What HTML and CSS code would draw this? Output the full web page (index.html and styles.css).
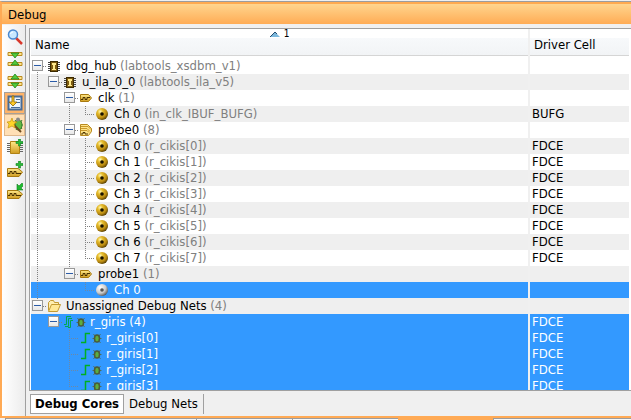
FILE: index.html
```html
<!DOCTYPE html>
<html lang="en"><head><meta charset="utf-8"><title>Debug</title><link rel="stylesheet" href="styles.css"></head>
<body>
<svg class="defs" aria-hidden="true">
<defs>
<radialGradient id="gold" cx=".35" cy=".3" r=".75"><stop offset="0" stop-color="#fff8b8"/><stop offset=".3" stop-color="#e6bc2c"/><stop offset=".7" stop-color="#b98a10"/><stop offset="1" stop-color="#4e3800"/></radialGradient>
<radialGradient id="silver" cx=".35" cy=".3" r=".75"><stop offset="0" stop-color="#fff"/><stop offset=".6" stop-color="#ccc"/><stop offset="1" stop-color="#555"/></radialGradient>
<linearGradient id="brass" x1="0" y1="0" x2="0" y2="1"><stop offset="0" stop-color="#ffe98a"/><stop offset="1" stop-color="#d09c20"/></linearGradient>
<path id="plus" d="M11.500 0h2v2.500H16v2h-2.500V7h-2V4.500H9v-2h2.500z" fill="#28bd38" stroke="#138020" stroke-width=".6"/>
<g id="port"><path d="M.5 7.500H11l4.500 3.500L12 15.500H.5z" fill="url(#brass)" stroke="#a87a10"/><path d="M1 12.500h2v-2h2v2h2v-2h2v2h5" fill="none" stroke="#4a3200"/></g>
<g id="bug"><path d="M14.500 4l7 9M21.500 4l-7 9M13.500 8.500h9" stroke="#4f7060"/><ellipse cx="18" cy="8.500" rx="2.500" ry="3.500" fill="#5cae40" stroke="#4a5a3a" stroke-width="1.500"/></g>
</defs>
<symbol id="core" viewBox="0 0 16 16"><path d="M1 4.500h12M1 6.500h12M1 8.500h12M1 10.500h12M1 12.500h12" stroke="#444"/><path d="M3 3h8v11H3z" fill="#3c2a00"/><path d="M4 4h6v9H4z" fill="#7c5a10"/><path d="M5 5h4v2H8v4h1v1H5v-1h1V7H5z" fill="#ffe98a"/></symbol>
<symbol id="probe" viewBox="0 0 16 16"><path d="M1.500 4.500H9.500L12.500 8L9.500 11.500H1.500z" fill="url(#brass)" stroke="#a87a10"/><path d="M2 9.500h2v-2h2v2h2v-2h3" fill="none" stroke="#4a3200"/></symbol>
<symbol id="bus" viewBox="0 0 16 16"><path d="M1.500 2.500H8.500L12.500 6.500V9.500L9.500 13.500H1.500z" fill="#ffe58a" stroke="#b98a20"/><path d="M2 4.500h7l3 3M2 6.500h6l3 3M2 8.500h6l2 2" fill="none" stroke="#c9972a"/><path d="M2 12h2v-1.500h2V12h3" fill="none" stroke="#4a3200"/></symbol>
<symbol id="ch" viewBox="0 0 16 16"><circle cx="7" cy="8" r="6" fill="url(#gold)"/><circle cx="7" cy="8" r="1.800" fill="#171100"/></symbol>
<symbol id="chfree" viewBox="0 0 16 16"><circle cx="7" cy="8" r="6" fill="url(#silver)"/><circle cx="7" cy="8" r="1.800" fill="#555"/></symbol>
<symbol id="folder" viewBox="0 0 16 16"><path d="M1.500 12.500V4.500L3.500 2.500H6.500L7.500 4.500H11.500V6.500" fill="#ffeeb0" stroke="#c39a32"/><path d="M1.500 13.500L4.500 6.500H13.500L10.500 13.500z" fill="#ffe895" stroke="#c39a32"/></symbol>
<symbol id="net" viewBox="0 0 24 16"><path d="M2 12.500H6.500V3.500H11" fill="none" stroke="#00b020" stroke-width="1.500"/><use href="#bug"/></symbol>
<symbol id="nets" viewBox="0 0 24 16"><path d="M1 10.500H3.500V2.500H8M2 12.500H5.500V4.500H9M5 13.500H7.500V6.500H10" fill="none" stroke="#00a850"/><use href="#bug"/></symbol>
</svg>
<main class="window">
<h1 class="title">Debug</h1>
<div class="body">
<nav class="toolbar" aria-label="Debug tools">
<button aria-label="Find"><svg viewBox="0 0 16 16"><path d="M9 9l6 6" stroke="#d8382c" stroke-width="2.500"/><circle cx="6" cy="5.500" r="4.500" fill="#c8e8ff" stroke="#4a88d0" stroke-width="1.500"/><path d="M3.500 5q.5-2 2.500-2" stroke="#fff" fill="none"/></svg></button>
<button aria-label="Collapse all"><svg viewBox="0 0 16 16"><path d="M1 4.500V1.500H15V4.500zM1 14.500V11.500H15V14.500z" fill="#ffe38a" stroke="#b98a20"/><path d="M4 2h8L8 7zM4 14h8L8 9z" fill="#54c93c" stroke="#107a10" stroke-width=".7"/></svg></button>
<button aria-label="Expand all"><svg viewBox="0 0 16 16"><path d="M1 6.500V3.500H15V6.500zM1 12.500V9.500H15V12.500z" fill="#ffe38a" stroke="#b98a20"/><path d="M4 6h8L8 1zM4 10h8l-4 5z" fill="#54c93c" stroke="#107a10" stroke-width=".7"/></svg></button>
<button class="on" aria-label="Auto scroll" aria-pressed="true"><svg viewBox="0 0 16 16"><path d="M1.500 1.500h13v13h-13z" fill="#edf6ff" stroke="#486c98" stroke-width="2"/><path d="M9 4.500h4M9 7.500h4M4 12.500h9" stroke="#486c98"/><path d="M5 1h2v6h3l-4 4-4-4h3z" fill="#ffca28" stroke="#8b6508" stroke-width=".8"/></svg></button>
<button class="on light" aria-label="Set up debug" aria-pressed="true"><svg viewBox="0 0 16 16"><path d="M8 3l7 9M15 3l-6 10M8 8h8" stroke="#357d2c"/><ellipse cx="11.500" cy="8" rx="3.500" ry="5" fill="#60ba42" stroke="#357d2c"/><circle cx="11" cy="2.500" r="2" fill="#888"/><path d="M6 7l8 8" stroke="#6d4a20" stroke-width="2"/><path d="M5 1l1 3.500L10 5 7 7l1 4-3-2-4 2 1-4-2-2 3.500-.5z" fill="#ffd52a" stroke="#c29310" stroke-width=".7"/></svg></button>
<button aria-label="Create debug core"><svg viewBox="0 0 16 16"><path d="M0 4.500h16M0 6.500h16M0 8.500h16M0 10.500h16M0 12.500h16" stroke="#666"/><path d="M3.500 2.500h9v12h-9z" fill="url(#brass)" stroke="#b08215"/><use href="#plus"/></svg></button>
<button aria-label="Create debug port"><svg viewBox="0 0 16 16"><use href="#port"/><use href="#plus"/></svg></button>
<button aria-label="Connect debug port"><svg viewBox="0 0 16 16"><use href="#port"/><path d="M15 0l-3 3-2-2v6h6l-2-2 3-3z" fill="#20b830" stroke="#138020" stroke-width=".6"/></svg></button>
</nav>
<section class="content">
<div class="pane">
<table>
<colgroup><col><col class="driver"></colgroup>
<thead><tr><th>Name<span class="sort"><svg viewBox="0 0 10 5"><path d="M0 5L5 0l5 5z" fill="#7cb8dc"/><path d="M0 5l5-5 2 2" fill="none" stroke="#254e70"/></svg>1</span></th><th>Driver Cell</th></tr></thead>
<tbody>
<tr><td><div class="node"><button class="box down" aria-label="Collapse"></button><svg><use href="#core"/></svg><span>dbg_hub <i>(labtools_xsdbm_v1)</i></span></div></td><td></td></tr>
<tr><td><div class="node"><b class="v"></b><button class="box" aria-label="Collapse"></button><svg><use href="#core"/></svg><span>u_ila_0_0 <i>(labtools_ila_v5)</i></span></div></td><td></td></tr>
<tr><td><div class="node"><b class="v"></b><b></b><button class="box down" aria-label="Collapse"></button><svg><use href="#probe"/></svg><span>clk <i>(1)</i></span></div></td><td></td></tr>
<tr><td><div class="node"><b class="v"></b><b></b><b class="v"></b><b class="end"></b><svg><use href="#ch"/></svg><span>Ch 0 <i>(in_clk_IBUF_BUFG)</i></span></div></td><td>BUFG</td></tr>
<tr><td><div class="node"><b class="v"></b><b></b><button class="box through" aria-label="Collapse"></button><svg><use href="#bus"/></svg><span>probe0 <i>(8)</i></span></div></td><td></td></tr>
<tr><td><div class="node"><b class="v"></b><b></b><b class="v"></b><b class="v h"></b><svg><use href="#ch"/></svg><span>Ch 0 <i>(r_cikis[0])</i></span></div></td><td>FDCE</td></tr>
<tr><td><div class="node"><b class="v"></b><b></b><b class="v"></b><b class="v h"></b><svg><use href="#ch"/></svg><span>Ch 1 <i>(r_cikis[1])</i></span></div></td><td>FDCE</td></tr>
<tr><td><div class="node"><b class="v"></b><b></b><b class="v"></b><b class="v h"></b><svg><use href="#ch"/></svg><span>Ch 2 <i>(r_cikis[2])</i></span></div></td><td>FDCE</td></tr>
<tr><td><div class="node"><b class="v"></b><b></b><b class="v"></b><b class="v h"></b><svg><use href="#ch"/></svg><span>Ch 3 <i>(r_cikis[3])</i></span></div></td><td>FDCE</td></tr>
<tr><td><div class="node"><b class="v"></b><b></b><b class="v"></b><b class="v h"></b><svg><use href="#ch"/></svg><span>Ch 4 <i>(r_cikis[4])</i></span></div></td><td>FDCE</td></tr>
<tr><td><div class="node"><b class="v"></b><b></b><b class="v"></b><b class="v h"></b><svg><use href="#ch"/></svg><span>Ch 5 <i>(r_cikis[5])</i></span></div></td><td>FDCE</td></tr>
<tr><td><div class="node"><b class="v"></b><b></b><b class="v"></b><b class="v h"></b><svg><use href="#ch"/></svg><span>Ch 6 <i>(r_cikis[6])</i></span></div></td><td>FDCE</td></tr>
<tr><td><div class="node"><b class="v"></b><b></b><b class="v"></b><b class="end"></b><svg><use href="#ch"/></svg><span>Ch 7 <i>(r_cikis[7])</i></span></div></td><td>FDCE</td></tr>
<tr><td><div class="node"><b class="v"></b><b></b><button class="box up" aria-label="Collapse"></button><svg><use href="#probe"/></svg><span>probe1 <i>(1)</i></span></div></td><td></td></tr>
<tr class="selected"><td><div class="node"><b class="v"></b><b></b><b></b><b class="end"></b><svg><use href="#chfree"/></svg><span>Ch 0</span></div></td><td></td></tr>
<tr><td><div class="node"><button class="box up" aria-label="Collapse"></button><svg><use href="#folder"/></svg><span>Unassigned Debug Nets <i>(4)</i></span></div></td><td></td></tr>
<tr class="selected"><td><div class="node"><b></b><button class="box" aria-label="Collapse"></button><svg class="wide"><use href="#nets"/></svg><span>r_giris (4)</span></div></td><td>FDCE</td></tr>
<tr class="selected"><td><div class="node"><b></b><b></b><b class="v h"></b><svg class="wide"><use href="#net"/></svg><span>r_giris[0]</span></div></td><td>FDCE</td></tr>
<tr class="selected"><td><div class="node"><b></b><b></b><b class="v h"></b><svg class="wide"><use href="#net"/></svg><span>r_giris[1]</span></div></td><td>FDCE</td></tr>
<tr class="selected"><td><div class="node"><b></b><b></b><b class="v h"></b><svg class="wide"><use href="#net"/></svg><span>r_giris[2]</span></div></td><td>FDCE</td></tr>
<tr class="selected"><td><div class="node"><b></b><b></b><b class="end"></b><svg class="wide"><use href="#net"/></svg><span>r_giris[3]</span></div></td><td>FDCE</td></tr>
</tbody>
</table>
</div>
<div class="tabs" role="tablist"><button class="active" role="tab" aria-selected="true">Debug Cores</button><button role="tab" aria-selected="false">Debug Nets</button></div>
</section>
</div>
</main>
<footer class="dock"><span></span><span></span><span></span><span class="wide-tab"></span><span class="current"></span><span class="rest"></span></footer>
</body></html>
```
FILE: styles.css
```css
* { box-sizing: border-box; }
body { margin: 0; height: 100vh; display: flex; flex-direction: column; overflow: hidden; background: #f0f0f0; color: #000; font: 13px/16px "DejaVu Sans Condensed", "Noto Sans", sans-serif; }
button { font: inherit; color: inherit; padding: 0; border: 0; background: none; }
.defs { position: absolute; width: 0; height: 0; }
.window { flex: 1; min-height: 0; display: flex; flex-direction: column; margin-top: 1px; border: 2px solid #ffaa55; border-top: 1px solid #9c9c9c; border-right: 0; }
.title { margin: 0; height: 22px; padding: 3px 6px 0; border-top: 2px solid #ffaa50; background: linear-gradient(#ffd58e, #ffac55); font: inherit; line-height: 16px; }
.body { flex: 1; min-height: 0; display: flex; }
.toolbar { width: 24px; padding-top: 1px; margin-top: 1px; border-right: 1px solid #a0a0a0; background: linear-gradient(90deg, #fff, #ececec); }
.toolbar button { width: 21px; height: 22px; margin-left: 2px; display: grid; place-items: center; border: 1px solid transparent; }
.toolbar svg { width: 16px; height: 16px; }
.toolbar .on { background: #ffb469; border-color: #a8a098; }
.toolbar .light { background: #ffdfb5; border-color: #dfb78c; }
.content { flex: 1; min-width: 0; display: flex; flex-direction: column; padding: 4px 0 2px 3px; }
.pane { flex: 1; min-height: 0; overflow: hidden; border: 1px solid #a0a0a0; border-right: 0; background: #fff; padding: 0 2px 0 1px; }
table { width: 100%; table-layout: fixed; border-collapse: separate; border-spacing: 0; }
.driver { width: 99px; }
th { position: relative; height: 29px; padding: 3px 4px 0; text-align: left; font-weight: normal; background: linear-gradient(#fff 9px, #f7f9fb 9px, #f2f4f6 26px, #d5d5d5 26px, #d5d5d5 27px, #fff 27px); }
th:first-child, td:first-child { border-right: 2px solid #f0f0f0; }
.sort { position: absolute; left: 0; right: 0; top: 0; display: flex; justify-content: center; align-items: center; gap: 4px; font-size: 10px; line-height: 10px; }
.sort svg { width: 10px; height: 5px; }
td { height: 16px; padding: 0 0 0 2px; white-space: nowrap; overflow: hidden; }
td:first-child { padding: 0; }
tbody tr:nth-child(even) { background: #efefef; }
.node { display: flex; height: 16px; }
.node svg { flex: none; width: 16px; height: 16px; margin-right: 3px; }
.node .wide { width: 24px; }
.node i { font-style: normal; color: #808080; }
.node b { --line: #808080; flex: none; width: 16px; height: 16px; background-repeat: no-repeat; }
.v { background-image: repeating-linear-gradient(var(--line) 0 1px, transparent 1px 2px); background-size: 1px 16px; background-position: 6px 0; }
.node .h, .node .end { background-image: repeating-linear-gradient(var(--line) 0 1px, transparent 1px 2px), repeating-linear-gradient(90deg, var(--line) 0 1px, transparent 1px 2px); background-size: 1px 16px, 9px 1px; background-position: 6px 0, 6px 8px; }
.node .end { background-size: 1px 8px, 9px 1px; }
.box { --top: 3px; --span: 10px; flex: none; width: 16px; height: 16px; background: linear-gradient(#2b5ca8, #2b5ca8) 3px 7px / 7px 1px no-repeat, linear-gradient(#fff, #e8e8e8) 2px 3px / 9px 9px no-repeat, linear-gradient(#989898, #989898) 1px 2px / 11px 11px no-repeat, repeating-linear-gradient(90deg, #808080 0 1px, transparent 1px 2px) 12px 8px / 4px 1px no-repeat, repeating-linear-gradient(#808080 0 1px, transparent 1px 2px) 6px var(--top) / 1px var(--span) no-repeat; }
.up { --top: 0px; }
.down { --top: 6px; }
.through { --top: 0px; --span: 16px; }
tbody tr.selected { background: #3399ff; color: #fff; }
.selected .node b { --line: #6e88a4; }
.tabs { display: flex; margin: 3px 0 0 1px; height: 20px; }
.tabs button { padding: 0 5px; border-right: 1px solid #a0a0a0; }
.tabs .active { border: 1px solid #a0a0a0; background: #fff; font-weight: bold; padding: 0 4px; }
.dock { height: 2px; display: flex; padding-left: 5px; }
.dock span { flex: 18; border-top: 1px solid #9c9c9c; border-left: 1px solid #9c9c9c; background: #f8f8f8; }
.dock .wide-tab { flex: 20; }
.dock .current { border-color: #ffaa55; background: #ffaa55; }
.dock .rest { flex: 26; }
```
